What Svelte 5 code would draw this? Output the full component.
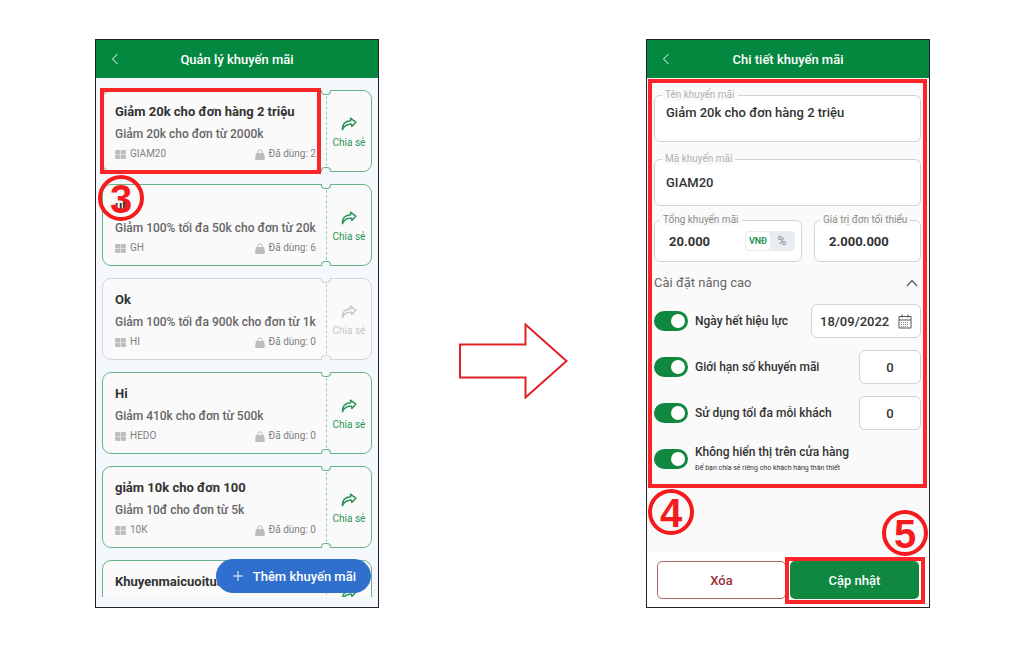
<script lang="ts">
	type Promo = { title: string; desc?: string; code?: string; used?: number; disabled?: boolean; marked?: boolean };

	const promos: Promo[] = [
		{ title: 'Giảm 20k cho đơn hàng 2 triệu', desc: 'Giảm 20k cho đơn từ 2000k', code: 'GIAM20', used: 2, marked: true },
		{ title: 'ub', desc: 'Giảm 100% tối đa 50k cho đơn từ 20k', code: 'GH', used: 6 },
		{ title: 'Ok', desc: 'Giảm 100% tối đa 900k cho đơn từ 1k', code: 'HI', used: 0, disabled: true },
		{ title: 'Hi', desc: 'Giảm 410k cho đơn từ 500k', code: 'HEDO', used: 0 },
		{ title: 'giảm 10k cho đơn 100', desc: 'Giảm 10đ cho đơn từ 5k', code: '10K', used: 0 },
		{ title: 'Khuyenmaicuoitua' }
	];

	let name = $state('Giảm 20k cho đơn hàng 2 triệu');
	let code = $state('GIAM20');
	let amount = $state('20.000');
	let minimum = $state('2.000.000');
	let unit = $state('VNĐ');
	let expiry = $state('18/09/2022');
	let advanced = $state(true);
	let hasExpiry = $state(true);
	let hidden = $state(true);
	let limits = $state([
		{ id: 'total', label: 'Giới hạn số khuyến mãi', on: true, value: '0' },
		{ id: 'per-guest', label: 'Sử dụng tối đa mỗi khách', on: true, value: '0' }
	]);
</script>

{#snippet header(title: string)}
	<header>
		<button class="back" aria-label="Quay lại">
			<svg width="8" height="12" viewBox="0 0 8 12"><path d="M6.5 1 1.5 6l5 5" /></svg>
		</button>
		<h1>{title}</h1>
	</header>
{/snippet}

<main>
	<section class="phone list-screen">
		{@render header('Quản lý khuyến mãi')}
		<div class="list">
			{#each promos as promo}
				<article class="ticket" class:disabled={promo.disabled}>
					<div class="info">
						<h2>{promo.title}</h2>
						{#if promo.desc}
							<p>{promo.desc}</p>
						{/if}
						{#if promo.code}
							<div class="meta">
								<svg width="11" height="9" viewBox="0 0 11 9">
									<path d="M1 0h3.500l.8.7V4H.5L0 3V1zM5.800.7 6.500 0H10l1 1v2l-.5 1H5.800zM.5 4.600h4.800v3.700l-.8.7H1L0 8V5.600zM5.800 4.600h4.700l.5 1V8l-1 1H6.500l-.7-.7z" />
								</svg>
								<span>{promo.code}</span>
								<svg class="bag" width="10" height="11" viewBox="0 0 10 11">
									<path d="M1 4h8l1 6-1 1H1l-1-1z" />
									<path class="handle" d="M2.800 5V3a2.200 2.200 0 0 1 4.400 0v2" />
								</svg>
								<span>Đã dùng: {promo.used}</span>
							</div>
						{/if}
					</div>
					<button class="share" disabled={promo.disabled}>
						<svg width="16" height="14" viewBox="0 0 16 14">
							<path d="M9.500 1.200 14.800 5.200l-4 4.300-.3-2.300C6 6.800 3.200 8.600 1.500 12.600 1 7.500 4 3.900 9.700 3.700z" />
						</svg>
						Chia sẻ
					</button>
					{#if promo.marked}
						<div class="mark mark-ticket"><b class="step">3</b></div>
					{/if}
				</article>
			{/each}
		</div>
		<button class="add">
			<svg width="10" height="10" viewBox="0 0 10 10"><path d="M5 0v10M0 5h10" /></svg>
			Thêm khuyến mãi
		</button>
	</section>

	<svg class="arrow" width="110" height="76" viewBox="0 0 110 76">
		<path d="M2 21.500h65.500V1.500L108.500 38l-41 36.500V54.500H2z" />
	</svg>

	<section class="phone">
		{@render header('Chi tiết khuyến mãi')}
		<div class="form">
			<div class="field">
				<label for="name">Tên khuyến mãi</label>
				<textarea id="name" rows="1" bind:value={name}></textarea>
			</div>
			<div class="field">
				<label for="code">Mã khuyến mãi</label>
				<input id="code" bind:value={code} />
			</div>
			<div class="amounts">
				<div class="field small">
					<label for="amount">Tổng khuyến mãi</label>
					<input id="amount" bind:value={amount} />
					<div class="units">
						{#each ['VNĐ', '%'] as option}
							<button class:active={unit === option} onclick={() => (unit = option)}>{option}</button>
						{/each}
					</div>
				</div>
				<div class="field small">
					<label for="minimum">Giá trị đơn tối thiểu</label>
					<input id="minimum" bind:value={minimum} />
				</div>
			</div>
			<button class="advanced" aria-expanded={advanced} onclick={() => (advanced = !advanced)}>
				Cài đặt nâng cao
				<svg width="12" height="8" viewBox="0 0 12 8"><path d="M1 7l5-5.500L11 7" /></svg>
			</button>
			{#if advanced}
				<div class="options">
					<div class="option">
						<input class="toggle" type="checkbox" id="has-expiry" bind:checked={hasExpiry} />
						<label for="has-expiry">Ngày hết hiệu lực</label>
						<div class="box date">
							<input aria-label="Ngày hết hiệu lực" bind:value={expiry} />
							<svg width="14" height="15" viewBox="0 0 14 15">
								<path d="M1 2.500h12v11.500H1zM1 6h12M4 .5v3M10 .5v3" />
								<path class="days" d="M3 8.500h8M3 10.500h8M3 12.500h8" />
							</svg>
						</div>
					</div>
					{#each limits as limit}
						<div class="option">
							<input class="toggle" type="checkbox" id={limit.id} bind:checked={limit.on} />
							<label for={limit.id}>{limit.label}</label>
							<div class="box number">
								<input aria-label={limit.label} bind:value={limit.value} />
							</div>
						</div>
					{/each}
					<div class="option">
						<input class="toggle" type="checkbox" id="hidden" bind:checked={hidden} />
						<label for="hidden">
							Không hiển thị trên cửa hàng
							<small>Để bạn chia sẻ riêng cho khách hàng thân thiết</small>
						</label>
					</div>
				</div>
			{/if}
			<div class="mark mark-form"><b class="step">4</b></div>
		</div>
		<footer>
			<button class="delete">Xóa</button>
			<button class="update">Cập nhật</button>
			<div class="mark mark-update"><b class="step">5</b></div>
		</footer>
	</section>
</main>

<style>
	:global(body) {
		background: #fff;
	}
	main {
		--green: #04873e;
		--red: #fb2529;
		box-sizing: border-box;
		height: 100vh;
		min-height: 647px;
		padding: 39px 94px 39px 95px;
		display: grid;
		grid-template-columns: 284fr 267fr 284fr;
		font-family: Roboto, sans-serif;
		font-size: 12px;
		color: #333;
	}
	main :global(*) {
		box-sizing: border-box;
	}
	button,
	input,
	textarea {
		font: inherit;
		color: inherit;
		margin: 0;
		padding: 0;
		border: none;
		background: none;
	}
	button {
		cursor: pointer;
	}
	svg {
		fill: none;
		stroke: currentColor;
		flex: none;
	}
	.phone {
		position: relative;
		display: flex;
		flex-direction: column;
		min-width: 0;
		min-height: 0;
		border: 1px solid #222;
		background: #fafafa;
	}
	.list-screen {
		background: #f4f8fc;
	}
	header {
		display: grid;
		grid-template-columns: 38px 1fr 38px;
		align-items: center;
		height: 38px;
		flex: none;
		background: var(--green);
		color: #fff;
	}
	.back {
		display: flex;
		justify-content: center;
	}
	h1 {
		margin: 0;
		font-size: 13px;
		font-weight: 500;
		text-align: center;
	}
	.list {
		flex: 1;
		min-height: 0;
		display: flex;
		flex-direction: column;
		gap: 12px;
		margin-bottom: 10px;
		padding: 12px 6px 0;
		overflow: hidden;
	}
	.ticket {
		position: relative;
		display: flex;
		flex: none;
		height: 82px;
		border: 1px solid #68b58a;
		border-radius: 9px;
		background: #fafafa;
	}
	.ticket::before,
	.ticket::after {
		content: '';
		position: absolute;
		right: 40px;
		width: 8px;
		height: 4px;
		border: 1px solid #68b58a;
		background: #f4f8fc;
	}
	.ticket::before {
		top: -1px;
		border-top: none;
		border-radius: 0 0 4px 4px;
	}
	.ticket::after {
		bottom: -1px;
		border-bottom: none;
		border-radius: 4px 4px 0 0;
	}
	.info {
		flex: 1;
		min-width: 0;
		padding: 12px 10px 0 12px;
		border-right: 1px dashed #8fd0ae;
	}
	h2 {
		margin: 0;
		font-size: 13px;
		font-weight: 700;
		line-height: 18px;
		white-space: nowrap;
	}
	.info p {
		margin: 4px 0 0;
		font-size: 12px;
		font-weight: 500;
		line-height: 18px;
		color: #666;
		white-space: nowrap;
	}
	.meta {
		display: flex;
		align-items: center;
		gap: 4px;
		margin-top: 4px;
		font-size: 10px;
		line-height: 14px;
		color: #808080;
		white-space: nowrap;
	}
	.meta svg {
		fill: #bdbdbd;
		stroke: none;
	}
	.meta .bag {
		margin-left: auto;
	}
	.meta .handle {
		fill: none;
		stroke: #bdbdbd;
	}
	.share {
		display: flex;
		flex-direction: column;
		align-items: center;
		justify-content: center;
		gap: 5px;
		width: 44px;
		padding-top: 4px;
		font-size: 10px;
		line-height: 14px;
		color: #2b9558;
		white-space: nowrap;
	}
	.share svg {
		stroke-width: 1.5;
		stroke-linejoin: round;
	}
	.disabled,
	.disabled::before,
	.disabled::after {
		border-color: #d3d5d7;
	}
	.disabled .info {
		border-color: #c4c4c4;
	}
	.disabled .share {
		color: #c8c8c8;
	}
	.add {
		position: absolute;
		right: 7px;
		bottom: 14px;
		display: flex;
		align-items: center;
		gap: 10px;
		height: 34px;
		padding: 0 15px 0 17px;
		border-radius: 17px;
		background: #316fce;
		color: #fff;
		font-size: 13px;
		font-weight: 500;
	}
	.arrow {
		justify-self: center;
		align-self: center;
		margin-top: 75px;
		stroke: #df2226;
		stroke-width: 2;
	}
	.mark {
		position: absolute;
		z-index: 1;
		border: 4px solid var(--red);
		pointer-events: none;
	}
	.step {
		position: absolute;
		width: 46px;
		height: 46px;
		border: 4px solid #f51a1e;
		border-radius: 50%;
		color: #f51a1e;
		font: bold 40px/40px 'Liberation Sans', sans-serif;
		text-align: center;
	}
	.mark-ticket {
		inset: -3px 50px -3px -3px;
	}
	.mark-ticket .step {
		left: -6px;
		top: 83px;
	}
	.mark-form {
		inset: 1px 2px 0 1px;
	}
	.mark-form .step {
		left: -4px;
		bottom: -51px;
	}
	.mark-update {
		inset: 5px 4px 3px 138px;
	}
	.mark-update .step {
		right: -7px;
		top: -51px;
	}
	.form {
		position: relative;
		display: flex;
		flex-direction: column;
		padding: 17px 8px 12px 7px;
	}
	.field {
		position: relative;
		display: flex;
		align-items: center;
		height: 47px;
		margin-bottom: 17px;
		border: 1px solid #d2d2d2;
		border-radius: 6px;
		background: #fff;
		font-size: 13px;
		font-weight: 500;
	}
	.field label {
		position: absolute;
		left: 7px;
		top: -7px;
		padding: 0 3px;
		background: #fafafa;
		font-size: 10px;
		font-weight: 400;
		line-height: 12px;
		color: #b0b0b0;
		white-space: nowrap;
	}
	.field input,
	.field textarea {
		flex: 1;
		width: 0;
		padding: 0 11px;
	}
	.field textarea {
		height: 28px;
		align-self: flex-start;
		padding-top: 8px;
		line-height: 18px;
		resize: none;
		overflow: hidden;
	}
	.amounts {
		display: grid;
		grid-template-columns: 148fr 107fr;
		gap: 12px;
		margin-top: -3px;
	}
	.field.small {
		height: 42px;
		margin: 0;
		font-weight: 700;
	}
	.small label {
		left: 5px;
		color: #8a8a8a;
	}
	.small input {
		padding: 0 0 0 14px;
	}
	.units {
		display: flex;
		margin-right: 6px;
		padding: 1px;
		border-radius: 4px;
		background: #e9edf2;
		font-size: 12px;
		font-weight: 400;
		color: #888;
	}
	.units button {
		width: 24px;
		height: 18px;
		border-radius: 4px;
	}
	.units .active {
		background: #fff;
		font-size: 9px;
		font-weight: 700;
		color: #2b9558;
	}
	.advanced {
		display: flex;
		align-items: center;
		justify-content: space-between;
		margin: 11px 0;
		padding-right: 3px;
		font-size: 13px;
		line-height: 20px;
		color: #666;
	}
	.advanced svg {
		stroke-width: 1.5;
	}
	.options {
		display: flex;
		flex-direction: column;
		gap: 12px;
	}
	.option {
		display: flex;
		align-items: center;
		gap: 7px;
		min-height: 34px;
	}
	.option > label {
		flex: 1;
		font-size: 12px;
		font-weight: 500;
		line-height: 18px;
		white-space: nowrap;
	}
	.option small {
		display: block;
		font-size: 7px;
		font-weight: 400;
		line-height: 14px;
	}
	.toggle {
		appearance: none;
		display: flex;
		flex: none;
		width: 34px;
		height: 20px;
		padding: 3px;
		border-radius: 10px;
		background: #ccc;
		cursor: pointer;
	}
	.toggle::before {
		content: '';
		width: 14px;
		height: 14px;
		border-radius: 50%;
		background: #fff;
	}
	.toggle:checked {
		justify-content: flex-end;
		background: #108840;
	}
	.box {
		display: flex;
		align-items: center;
		height: 34px;
		border: 1px solid #d2d2d2;
		border-radius: 6px;
		background: #fff;
		font-size: 13px;
		font-weight: 500;
	}
	.box input {
		flex: 1;
		width: 0;
	}
	.date {
		width: 110px;
		padding: 0 8px;
	}
	.date svg {
		stroke: #555;
	}
	.date .days {
		stroke-dasharray: 1 1;
		stroke: #888;
	}
	.number {
		width: 62px;
	}
	.number input {
		text-align: center;
	}
	footer {
		position: relative;
		display: grid;
		grid-template-columns: 1fr 1fr;
		gap: 4px;
		margin-top: auto;
		padding: 9px 10px 8px;
		background: #fff;
		font-size: 13px;
		font-weight: 500;
	}
	footer button {
		height: 38px;
		border-radius: 5px;
	}
	.delete {
		border: 1px solid #b06060;
		color: #9a3035;
	}
	.update {
		background: #108840;
		color: #fff;
	}
</style>
